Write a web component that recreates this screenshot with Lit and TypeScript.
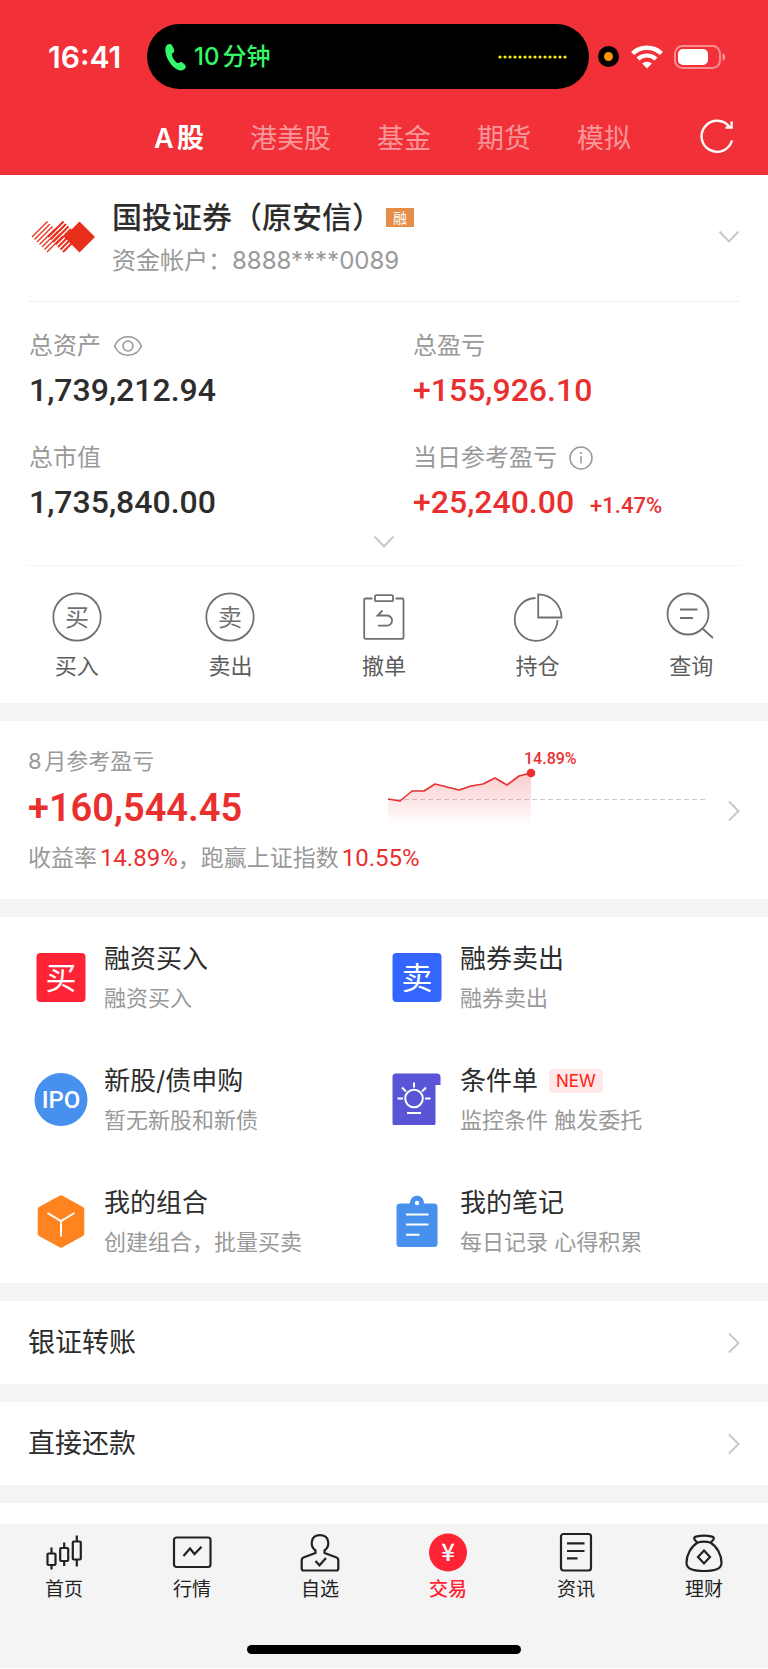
import { LitElement, html, css, svg, nothing } from "lit";
import { customElement, property, state } from "lit/decorators.js";
import { classMap } from "lit/directives/class-map.js";

const FONT = css`Inter, "Noto Sans CJK SC", sans-serif`;
const NUM = css`Roboto, "Noto Sans CJK SC", sans-serif`;

const reset = css`
  * {
    box-sizing: border-box;
  }
  button {
    margin: 0;
    padding: 0;
    border: 0;
    background: none;
    color: inherit;
    font: inherit;
    text-align: left;
    cursor: pointer;
  }
  a {
    color: inherit;
    text-decoration: none;
  }
  dl,
  dt,
  dd {
    margin: 0;
  }
  svg {
    display: block;
    flex: none;
  }
`;

const chevronDown = html`<svg width="22" height="14" viewBox="0 0 22 14" fill="none" stroke="#c8c8c8" stroke-width="2" aria-hidden="true">
  <path d="M1.5 1.5 11 11.5 20.5 1.5" />
</svg>`;

const chevronRight = html`<svg width="12" height="22" viewBox="0 0 12 22" fill="none" stroke="#c8c8c8" stroke-width="2" aria-hidden="true">
  <path d="M1 1.5 10.5 11 1 20.5" />
</svg>`;

@customElement("status-header")
export class StatusHeader extends LitElement {
  @state() private active = "A股";

  static styles = [
    reset,
    css`
      :host {
        display: block;
        background: #f23037;
        color: #fff;
        padding-top: 24px;
      }
      .status {
        display: flex;
        align-items: center;
        height: 65px;
        padding: 0 42px 0 48px;
      }
      .time {
        flex: 0 0 99px;
        font-size: 30px;
        font-weight: 600;
        line-height: 36px;
      }
      .island {
        flex: 1;
        display: flex;
        align-items: center;
        height: 65px;
        padding: 0 22px 0 18px;
        border-radius: 33px;
        background: #000;
        color: #31fb69;
        font-size: 24px;
        font-weight: 500;
        line-height: 32px;
      }
      .call {
        flex: 1;
        margin-left: 8px;
      }
      .mic {
        width: 21px;
        height: 21px;
        margin: 0 12px 0 9px;
        border: 6px solid #000;
        border-radius: 50%;
        background: #ff9500;
      }
      .wifi {
        margin-right: 11px;
      }
      .nav {
        display: flex;
        align-items: center;
        gap: 46px;
        height: 86px;
        padding: 14px 34px 0 154px;
        font-size: 27px;
        line-height: 40px;
      }
      .tab {
        color: rgba(255, 255, 255, 0.5);
        white-space: nowrap;
      }
      .tab.on {
        color: #fff;
        font-weight: 600;
      }
      .refresh {
        margin: 0 0 6px auto;
      }
    `,
  ];

  render() {
    return html`
      <div class="status">
        <span class="time">16:41</span>
        <div class="island">
          <svg width="21" height="28" viewBox="0 0 21 28" fill="currentColor" aria-hidden="true">
            <path d="M2.200 1.800C4 .4 6.300 .8 7.200 2.600L8.900 6.300C9.600 7.900 9.100 9.200 7.800 10.100 6.700 10.900 6.600 11.900 7.200 13.300 8 15.400 9.300 17.500 10.900 19.100 12 20.200 13 20.400 14.100 19.700 15.400 18.800 16.700 18.900 17.900 19.900L20 21.800C21.300 23.200 20.900 25 19.300 26.200 16.700 28.100 13.200 27.700 9.900 25.100 5.600 21.700 2 16.100 .8 10.500 0 6.800 .2 3.500 2.200 1.800Z" />
          </svg>
          <span class="call">10分钟</span>
          <svg width="69" height="4" viewBox="0 0 69 4" fill="#f5ee14" aria-hidden="true">
            ${Array.from({ length: 14 }, (_, i) => svg`<circle cx=${2 + i * 5} cy="2" r="1.6" />`)}
          </svg>
        </div>
        <span class="mic"></span>
        <svg class="wifi" width="32" height="24" viewBox="0 0 32 24" fill="none" stroke="#fff" aria-hidden="true">
          <path d="M1.600 8.500C9.500.8 22.500.8 30.400 8.500" stroke-width="4.400" />
          <path d="M7 14.100C12 9.300 20 9.300 25 14.100" stroke-width="4.200" />
          <path d="M16 23.500 11.200 18.500C13.900 16.100 18.100 16.100 20.800 18.500Z" fill="#fff" stroke="none" />
        </svg>
        <svg width="52" height="24" viewBox="0 0 52 24" fill="none" aria-hidden="true">
          <rect x="1" y="1" width="45" height="22" rx="7.500" stroke="#fff" stroke-opacity=".45" stroke-width="2" />
          <rect x="4" y="4" width="30" height="16" rx="5" fill="#fff" />
          <path d="M48.500 8V16C50.200 15.300 51.300 13.800 51.300 12S50.200 8.700 48.500 8Z" fill="#fff" fill-opacity=".5" />
        </svg>
      </div>
      <nav class="nav">
        ${["A股", "港美股", "基金", "期货", "模拟"].map(
          (t) => html`<button class=${classMap({ tab: true, on: t === this.active })} @click=${() => (this.active = t)}>${t}</button>`
        )}
        <button class="refresh" aria-label="刷新">
          <svg width="34" height="36" viewBox="0 0 34 36" fill="none" stroke="#fff" stroke-width="2.400" aria-hidden="true">
            <path d="M32 22.500A15.500 15.500 0 1 1 29.500 9" />
            <path d="M31.600 3.500V9.600H25.500" />
          </svg>
        </button>
      </nav>
    `;
  }
}

@customElement("account-card")
export class AccountCard extends LitElement {
  static styles = [
    reset,
    css`
      :host {
        display: block;
        background: #fff;
      }
      .account {
        display: flex;
        align-items: center;
        width: calc(100% - 56px);
        margin: 0 28px;
        padding: 17px 0 20px;
        border-bottom: 1px solid #efefef;
      }
      .logo {
        margin: 0 17px 0 3px;
      }
      .who {
        flex: 1;
        display: grid;
        gap: 4px;
        padding-top: 5px;
        line-height: 40px;
      }
      .name {
        display: flex;
        align-items: center;
        gap: 4px;
        color: #2d2d2d;
        font-size: 30px;
        font-weight: 500;
      }
      .tag {
        padding: 0 7px;
        background: #e58e4a;
        color: #fff;
        font-size: 14px;
        font-weight: 400;
        line-height: 19px;
      }
      .no {
        color: #999;
        font-size: 24px;
      }
      .metrics {
        display: grid;
        grid-template-columns: 1fr 1fr;
        row-gap: 24px;
        padding-top: 26px;
      }
      .metric {
        padding-left: 29px;
      }
      .label {
        display: flex;
        align-items: center;
        gap: 12px;
        color: #999;
        font-size: 24px;
        line-height: 36px;
      }
      .value {
        height: 52px;
        color: #2d2d2d;
        font-family: ${NUM};
        font-size: 32px;
        font-weight: 500;
        line-height: 52px;
      }
      .up {
        color: #ea2f2f;
      }
      .pct {
        margin-left: 8px;
        font-size: 22px;
        line-height: 24px;
      }
      .expand {
        display: flex;
        justify-content: center;
        align-items: center;
        width: calc(100% - 56px);
        height: 38px;
        margin: 0 28px;
        padding-bottom: 10px;
        border-bottom: 1px solid #f3f3f3;
      }
      .actions {
        display: grid;
        grid-template-columns: repeat(5, 1fr);
        padding: 26px 0 21px;
      }
      .action {
        display: grid;
        justify-items: center;
        gap: 8px;
        color: #5c5c5c;
        font-size: 22px;
        line-height: 32px;
      }
    `,
  ];

  private ring(ch: string) {
    return svg`<circle cx="25" cy="25" r="23.700" />
      <text x="25" y="34" text-anchor="middle" font-size="24" fill="#707070" stroke="none">${ch}</text>`;
  }

  render() {
    const actions = [
      { name: "买入", art: this.ring("买") },
      { name: "卖出", art: this.ring("卖") },
      {
        name: "撤单",
        art: svg`<path d="M13.500 6.500H6.500Q5.200 6.500 5.200 7.800V45.500Q5.200 46.800 6.500 46.800H43.200Q44.500 46.800 44.500 45.500V7.800Q44.500 6.500 43.200 6.500H36.500" />
          <rect x="16" y="3.200" width="18" height="6" rx="1" />
          <path d="M23.500 18.500 18.500 23.500H28A5 5 0 0 1 28 33.700H19" />`,
      },
      {
        name: "持仓",
        art: svg`<path d="M22.500 6A21.400 21.400 0 1 0 44.500 28" /><path d="M25.200 2.300V25.500H48.500A23.300 23.300 0 0 0 25.200 2.300Z" />`,
      },
      {
        name: "查询",
        art: svg`<circle cx="22" cy="22" r="20.500" /><path d="M14 17.500H31.500M14 26H27M37 37 47 46" />`,
      },
    ];
    const stripes = (x: number, offsets: number[]) =>
      offsets.map((t) => `M${x + t} ${16 + t}L${x + 15.5 + t} ${0.5 + t}`).join("");
    return html`
      <button class="account">
        <svg class="logo" width="64" height="32" viewBox="0 0 64 32" aria-hidden="true">
          <path stroke="#e72f1c" stroke-width="1.300" d=${stripes(1, [0, 2.5, 5, 7.5, 10, 12.5, 15])} />
          <path stroke="#e72f1c" stroke-width="2.100" d=${stripes(17, [0, 2.5, 5, 7.5, 10, 12.5, 15])} />
          <path fill="#e72f1c" d="M48.500.5 64 16 48.500 31.500 33 16Z" />
        </svg>
        <span class="who">
          <span class="name">国投证券（原安信）<span class="tag">融</span></span>
          <span class="no">资金帐户：8888****0089</span>
        </span>
        ${chevronDown}
      </button>
      <dl class="metrics">
        <div class="metric">
          <dt class="label">
            总资产
            <svg width="30" height="22" viewBox="0 0 30 22" fill="none" stroke="#999" stroke-width="1.600" aria-hidden="true">
              <path d="M1.500 11C7-1.300 23-1.300 28.500 11 23 23.300 7 23.300 1.500 11Z" />
              <circle cx="15" cy="11" r="5" />
            </svg>
          </dt>
          <dd class="value">1,739,212.94</dd>
        </div>
        <div class="metric">
          <dt class="label">总盈亏</dt>
          <dd class="value up">+155,926.10</dd>
        </div>
        <div class="metric">
          <dt class="label">总市值</dt>
          <dd class="value">1,735,840.00</dd>
        </div>
        <div class="metric">
          <dt class="label">
            当日参考盈亏
            <svg width="24" height="24" viewBox="0 0 24 24" fill="none" stroke="#999" stroke-width="1.500" aria-hidden="true">
              <circle cx="12" cy="12" r="11" />
              <path d="M12 10V17.500" />
              <circle cx="12" cy="7" r="1.100" fill="#999" stroke="none" />
            </svg>
          </dt>
          <dd class="value up">+25,240.00 <span class="pct">+1.47%</span></dd>
        </div>
      </dl>
      <button class="expand" aria-label="展开">${chevronDown}</button>
      <div class="actions">
        ${actions.map(
          (a) => html`<button class="action">
            <svg width="50" height="50" viewBox="0 0 50 50" fill="none" stroke="#707070" stroke-width="1.800" aria-hidden="true">${a.art}</svg>
            ${a.name}
          </button>`
        )}
      </div>
    `;
  }
}

@customElement("profit-card")
export class ProfitCard extends LitElement {
  private points = [
    [0, 54], [12, 56], [24, 46], [36, 46], [47, 39], [59, 42], [71, 45],
    [83, 41], [95, 39], [107, 33], [119, 40], [131, 31], [143, 28],
  ];

  static styles = [
    reset,
    css`
      :host {
        display: block;
        background: #fff;
      }
      .card {
        display: grid;
        grid-template-columns: 1fr 340px 12px;
        grid-template-rows: 32px 62px 38px;
        width: 100%;
        padding: 24px 28px 22px;
        color: #999;
      }
      .label {
        grid-area: 1 / 1;
        font-size: 22px;
        line-height: 32px;
      }
      .value {
        grid-area: 2 / 1;
        color: #ea2f2f;
        font-family: ${NUM};
        font-size: 38px;
        font-weight: 600;
        line-height: 62px;
      }
      .note {
        grid-area: 3 / 1 / 4 / 3;
        font-size: 23px;
        line-height: 38px;
      }
      .up {
        color: #ea2f2f;
        font-family: ${NUM};
        font-size: 24px;
      }
      .chart {
        grid-area: 1 / 2 / 3 / 3;
        font-family: ${NUM};
      }
      .go {
        grid-area: 1 / 3 / 4 / 4;
        align-self: center;
      }
    `,
  ];

  render() {
    const line = this.points.map((p) => p.join(" ")).join("L");
    return html`
      <button class="card">
        <span class="label">8月参考盈亏</span>
        <span class="value">+160,544.45</span>
        <span class="note">收益率<span class="up">14.89%</span>，跑赢上证指数<span class="up">10.55%</span></span>
        <svg class="chart" width="320" height="94" viewBox="0 0 320 94" fill="none" role="img" aria-label="8月收益走势">
          <defs>
            <linearGradient id="fade" x1="0" y1="0" x2="0" y2="1">
              <stop offset="0" stop-color="#ea2f2f" stop-opacity=".24" />
              <stop offset="1" stop-color="#ea2f2f" stop-opacity="0" />
            </linearGradient>
          </defs>
          <path d="M0 54.500H320" stroke="#ccc" stroke-width="1.200" stroke-dasharray="5 3" />
          <path d=${`M${line}V82H0Z`} fill="url(#fade)" />
          <path d=${`M${line}`} stroke="#ea2f2f" stroke-width="1.600" stroke-linejoin="round" />
          <circle cx="143" cy="28" r="4.300" fill="#ea2f2f" />
          <text x="136" y="19" font-size="16" font-weight="500" fill="#ea2f2f">14.89%</text>
        </svg>
        <span class="go">${chevronRight}</span>
      </button>
    `;
  }
}

@customElement("service-grid")
export class ServiceGrid extends LitElement {
  static styles = [
    reset,
    css`
      :host {
        display: grid;
        grid-template-columns: 1fr 1fr;
        padding: 0 28px;
        background: #fff;
      }
      .item {
        display: flex;
        align-items: center;
        gap: 13px;
        height: 122px;
        padding-left: 3px;
        color: #2d2d2d;
      }
      .title {
        display: flex;
        align-items: center;
        gap: 11px;
        font-size: 26px;
        line-height: 40px;
      }
      .sub {
        display: block;
        color: #999;
        font-size: 22px;
        line-height: 38px;
      }
      .new {
        padding: 0 7px;
        border-radius: 4px;
        background: #ffe8ea;
        color: #ff200f;
        font-size: 17px;
        line-height: 24px;
      }
      .glyph {
        fill: #fff;
        font-size: 31px;
        text-anchor: middle;
      }
      .ipo {
        fill: #fff;
        font-family: ${NUM};
        font-size: 24px;
        font-weight: 500;
        text-anchor: middle;
      }
    `,
  ];

  render() {
    const items = [
      {
        title: "融资买入",
        sub: "融资买入",
        art: svg`<rect x="5.500" y="5" width="49" height="49" rx="4" fill="#ff2435" /><text class="glyph" x="30" y="41">买</text>`,
      },
      {
        title: "融券卖出",
        sub: "融券卖出",
        art: svg`<rect x="5.500" y="5" width="49" height="49" rx="4" fill="#3565ff" /><text class="glyph" x="30" y="41">卖</text>`,
      },
      {
        title: "新股/债申购",
        sub: "暂无新股和新债",
        art: svg`<circle cx="30" cy="29.500" r="26.500" fill="#4790ee" /><text class="ipo" x="30" y="38">IPO</text>`,
      },
      {
        title: "条件单",
        sub: "监控条件 触发委托",
        isNew: true,
        art: svg`<path fill="#5a55d6" d="M9 3.500H50Q53.500 3.500 53.500 7V15H48.500V53.500Q48.500 55 47 55H7Q5.500 55 5.500 53.500V7Q5.500 3.500 9 3.500Z" />
          <g fill="none" stroke="#fff" stroke-width="2"><circle cx="27" cy="28.500" r="8.800" />
          <path d="M27 12.500V17.500M10.500 28.500H16M38 28.500H43.500M15 17.500 19 21.500M39 17.500 35 21.500M20 43H34" /></g>`,
      },
      {
        title: "我的组合",
        sub: "创建组合，批量买卖",
        art: svg`<path fill="#ff8420" d="M28.500 3.700Q30 2.800 31.500 3.700L52 15Q53.300 15.800 53.300 17.300V41.700Q53.300 43.200 52 44L31.500 55.300Q30 56.200 28.500 55.300L8 44Q6.700 43.200 6.700 41.700V17.300Q6.700 15.800 8 15Z" />
          <path fill="none" stroke="#fff" stroke-width="2" d="M16.500 21 30 29 43.500 21M30 29V44.500" />`,
      },
      {
        title: "我的笔记",
        sub: "每日记录 心得积累",
        art: svg`<path fill="#4790ee" d="M23 11.500C23 1.300 37 1.300 37 11.500H47Q50.500 11.500 50.500 15V51.500Q50.500 55 47 55H13Q9.500 55 9.500 51.500V15Q9.500 11.500 13 11.500Z" />
          <circle cx="30" cy="11" r="2.200" fill="#fff" />
          <path fill="none" stroke="#fff" stroke-width="2" d="M19 22.500H41.500M19 32.500H41.500M19 42.800H32.500" />`,
      },
    ];
    return html`${items.map(
      (i) => html`<a class="item" href="#">
        <svg width="60" height="60" viewBox="0 0 60 60" aria-hidden="true">${i.art}</svg>
        <span>
          <span class="title">${i.title}${i.isNew ? html`<span class="new">NEW</span>` : nothing}</span>
          <span class="sub">${i.sub}</span>
        </span>
      </a>`
    )}`;
  }
}

@customElement("link-row")
export class LinkRow extends LitElement {
  @property() label = "";

  static styles = [
    reset,
    css`
      :host {
        display: block;
        background: #fff;
      }
      .row {
        display: flex;
        justify-content: space-between;
        align-items: center;
        height: 83px;
        padding: 0 28px;
        color: #2d2d2d;
        font-size: 27px;
        line-height: 40px;
      }
    `,
  ];

  render() {
    return html`<a class="row" href="#">${this.label}${chevronRight}</a>`;
  }
}

@customElement("tab-bar")
export class TabBar extends LitElement {
  static styles = [
    reset,
    css`
      :host {
        display: block;
        background: #f4f4f4;
        padding-bottom: 14px;
      }
      .tabs {
        display: grid;
        grid-template-columns: repeat(6, 1fr);
        padding: 8px 0 41px;
      }
      .tab {
        display: grid;
        justify-items: center;
        gap: 4px;
        color: #222;
        font-size: 19px;
        line-height: 28px;
      }
      .tab.on {
        color: #ff2435;
        font-weight: 500;
      }
      .yen {
        fill: #fff;
        font-family: "Noto Sans CJK SC", sans-serif;
        font-size: 24px;
        font-weight: 500;
        text-anchor: middle;
      }
      .home {
        width: 274px;
        height: 9px;
        margin: 0 auto;
        border-radius: 5px;
        background: #000;
      }
    `,
  ];

  render() {
    const tabs = [
      {
        name: "首页",
        art: svg`<rect x="3.500" y="21.500" width="8" height="11.500" rx="1" /><path d="M7.500 15.500V21.500M7.500 33V37.500" />
          <rect x="16.200" y="16" width="8" height="13" rx="1" /><path d="M20.200 10.500V16M20.200 29V34" />
          <rect x="28.800" y="9.500" width="8" height="18" rx="1" /><path d="M32.800 3.500V9.500M32.800 27.500V34.500" />`,
      },
      {
        name: "行情",
        art: svg`<rect x="2" y="5.500" width="36.500" height="29.500" rx="2.500" /><path d="M11.500 24 18 16.500 22.500 22 29.500 14.800" />`,
      },
      {
        name: "自选",
        art: svg`<path d="M15.500 21V18.500C9.500 14 10.500 3.200 20 3.200S30.500 14 24.500 18.500V21L36 25.200Q38.300 26 38.300 28.200V36.500Q38.300 38.500 36.300 38.500H3.700Q1.700 38.500 1.700 36.500V28.200Q1.700 26 4 25.200Z" />
          <path d="M15.500 29 19.500 33.300 26 26" />`,
      },
      {
        name: "交易",
        on: true,
        art: svg`<circle cx="20" cy="20.500" r="19" fill="#ff2435" stroke="none" /><text class="yen" x="20" y="29" stroke="none">¥</text>`,
      },
      {
        name: "资讯",
        art: svg`<rect x="5" y="2" width="30" height="36.500" rx="2.500" /><path d="M11 11.300H28.500M11 19H28.500M11 26.300H21.500" />`,
      },
      {
        name: "理财",
        art: svg`<path d="M13.300 10.700 10.500 7.500Q9.500 5.200 12 4.600 20 2.500 28 4.600 30.500 5.200 29.500 7.500L26.700 10.700" />
          <path d="M13.300 10.700Q20 8.700 26.700 10.700C33 14.500 37.500 23 37.500 30.500 37.500 36 33.500 39 20 39S2.500 36 2.500 30.500C2.500 23 7 14.500 13.300 10.700Z" />
          <path d="M20 18.500 26 25 20 31.500 14 25Z" />`,
      },
    ];
    return html`
      <nav class="tabs">
        ${tabs.map(
          (t) => html`<button class=${classMap({ tab: true, on: !!t.on })}>
            <svg width="40" height="40" viewBox="0 0 40 40" fill="none" stroke="#222" stroke-width="2.200" aria-hidden="true">${t.art}</svg>
            ${t.name}
          </button>`
        )}
      </nav>
      <div class="home"></div>
    `;
  }
}

@customElement("app-root")
export class AppRoot extends LitElement {
  static styles = [
    reset,
    css`
      :host {
        display: block;
        background: #f4f4f4;
        font-family: ${FONT};
        text-autospace: normal;
      }
      .page {
        display: grid;
        gap: 18px;
      }
      .next {
        height: 21px;
        background: #fff;
      }
    `,
  ];

  render() {
    return html`
      <main class="page">
        <div>
          <status-header></status-header>
          <account-card></account-card>
        </div>
        <profit-card></profit-card>
        <service-grid></service-grid>
        <link-row label="银证转账"></link-row>
        <link-row label="直接还款"></link-row>
        <div class="next"></div>
      </main>
      <tab-bar></tab-bar>
    `;
  }
}
